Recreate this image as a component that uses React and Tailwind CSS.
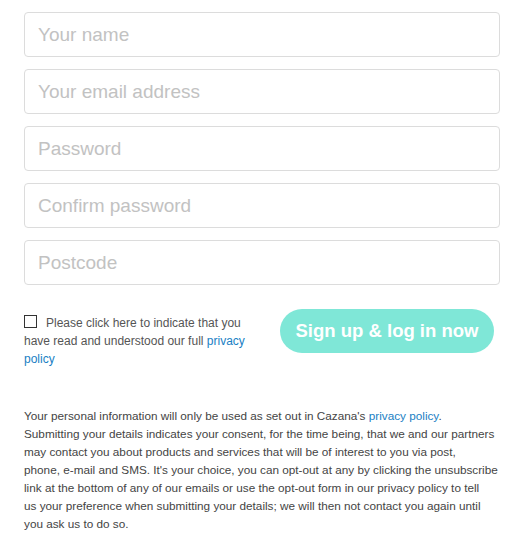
export default function App() {
  const fields = ['Your name', 'Your email address', 'Password', 'Confirm password', 'Postcode']
  return (
    <div className="w-[524px] bg-white px-6 pt-3 pb-6 text-[#444]" style={{ fontFamily: '"Liberation Sans", Arial, sans-serif' }}>
      <div className="flex flex-col gap-3">
        {fields.map((f) => (
          <input
            key={f}
            type={f.includes('assword') ? 'password' : 'text'}
            placeholder={f}
            className="h-[45px] w-full rounded-[4px] border border-[#dcdcdc] px-[13px] text-[19px] text-[#444] outline-none placeholder:text-[#c2c2c2]"
          />
        ))}
      </div>

      <div className="mt-6 flex items-start justify-between">
        <label className="w-[225px] pt-[5px] text-[12px] leading-[18px] text-[#555]">
          <span className="mr-[9px] inline-block h-[13px] w-[13px] border border-[#333] align-[-1px]" />
          Please click here to indicate that you have read and understood our full{' '}
          <a className="text-[#1a80c4]">privacy policy</a>
        </label>
        <button className="mr-[6px] h-[44px] w-[214px] rounded-full bg-[#7fe7d7] text-[18.5px] font-bold text-white">
          Sign up &amp; log in now
        </button>
      </div>

      <p className="-mr-4 mt-[39px] text-[11.75px] leading-[18px] text-[#444]">
        Your personal information will only be used as set out in Cazana's{' '}
        <a className="text-[#1a80c4]">privacy policy</a>.<br />
        Submitting your details indicates your consent, for the time being, that we and our partners<br />
        may contact you about products and services that will be of interest to you via post,<br />
        phone, e-mail and SMS. It's your choice, you can opt-out at any by clicking the unsubscribe<br />
        link at the bottom of any of our emails or use the opt-out form in our privacy policy to tell<br />
        us your preference when submitting your details; we will then not contact you again until<br />
        you ask us to do so.
      </p>
    </div>
  )
}
